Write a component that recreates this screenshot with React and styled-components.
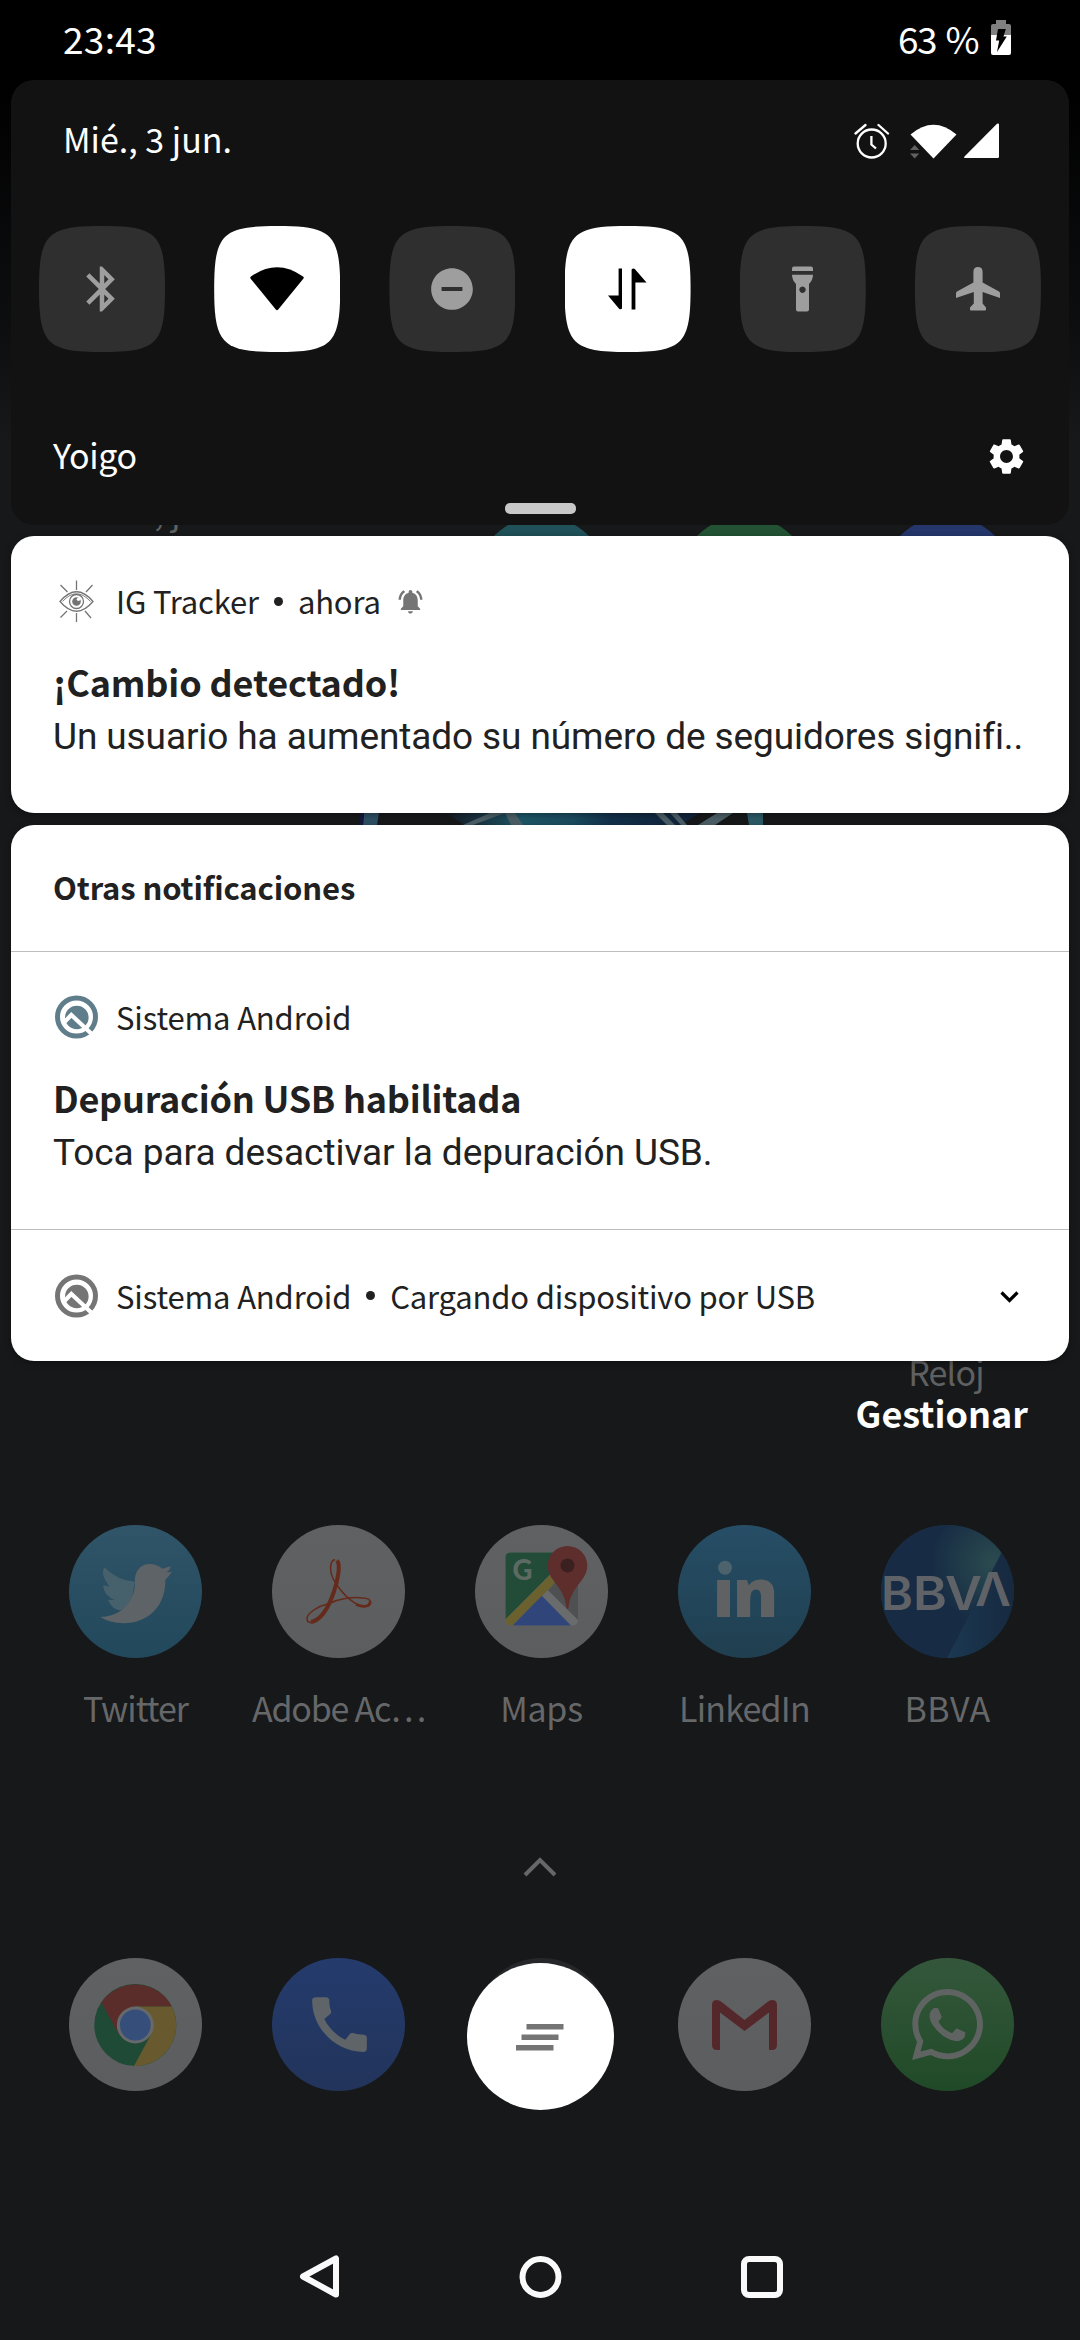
import React from "react";
import styled, { createGlobalStyle } from "styled-components";
import { MdBluetooth, MdDoNotDisturbOn, MdSettings, MdNotificationsActive, MdCall } from "react-icons/md";
import { FaWhatsapp } from "react-icons/fa";

const ui = `"Noto Sans CJK SC", "Noto Sans", sans-serif`;

const GlobalStyle = createGlobalStyle`
  * { box-sizing: border-box; }
  body { margin: 0; background: #161819; }
  svg { display: block; flex: none; }
`;

const Screen = styled.div`
  width: 1080px;
  height: 2340px;
  overflow: hidden;
  display: grid;
  grid-template: 2340px / 1080px;
  background: linear-gradient(#000 80px, #0d0e10 330px, #161819 440px);
  font-family: ${ui};
  color: #fff;
`;

const Layer = styled.div`
  grid-area: 1 / 1;
  display: flex;
  flex-direction: column;
  align-items: stretch;
`;

const Text = styled.span`
  font-family: ${(p) => p.$font || ui};
  font-size: ${(p) => p.$size}px;
  font-weight: ${(p) => p.$weight || 400};
  letter-spacing: ${(p) => p.$track || 0}px;
  word-spacing: ${(p) => p.$word || 0}px;
  line-height: 44px;
  color: ${(p) => p.$color || "inherit"};
  white-space: pre;
`;

/* ---------- launcher ---------- */

const Columns = styled.div`
  display: grid;
  grid-template-columns: repeat(5, 203px);
  margin: ${(p) => p.$top}px 0 0 34px;
  justify-items: center;
`;

const WidgetCell = styled.div`
  grid-column: span 2;
  justify-self: start;
  padding: 0 0 0 55px;
  margin-top: -27px;
`;

const HiddenApp = styled.div`
  width: 133px;
  height: 133px;
  border-radius: 50%;
  background: ${(p) => p.$color};
`;

const Artwork = styled.svg`
  margin: 164px 0 0 355px;
`;

const ClockLabel = styled(Text)`
  margin: 525px 67px 0 0;
  width: 134px;
  align-self: flex-end;
  text-align: center;
`;

const AppShortcut = styled.div`
  display: flex;
  flex-direction: column;
  align-items: center;
  gap: 28px;
`;

const Chevron = styled.svg`
  margin: 127px auto 0;
`;

/* ---------- shade ---------- */

const StatusBar = styled.div`
  height: 80px;
  padding: 0 69px 4px 63px;
  display: flex;
  align-items: center;
  justify-content: space-between;
`;

const Group = styled.div`
  display: flex;
  align-items: center;
  gap: ${(p) => p.$gap || 0}px;
`;

const Panel = styled.section`
  margin: 0 11px;
  height: 445px;
  padding-top: 34px;
  border-radius: 23px;
  background: #121212;
  display: flex;
  flex-direction: column;
`;

const DateRow = styled.div`
  height: 48px;
  padding: 1px 70px 0 52px;
  display: flex;
  align-items: center;
  justify-content: space-between;
`;

const StatusIcons = styled(Group)`
  padding-top: 5px;
`;

const Tiles = styled.div`
  margin: 64px 28px 0;
  display: flex;
  justify-content: space-between;
`;

const Tile = styled.button`
  width: 126px;
  height: 126px;
  padding: 0;
  border: 0;
  display: grid;
  place-items: center;
  background: ${(p) => (p.$on ? "#fff" : "#2f2f2f")};
  color: ${(p) => (p.$on ? "#000" : "#9e9e9e")};
  clip-path: path("M63 0C118 0 126 8 126 63C126 118 118 126 63 126C8 126 0 118 0 63C0 8 8 0 63 0Z");
`;

const CarrierRow = styled.div`
  height: 48px;
  margin-top: 80px;
  padding: 1px 41px 0 42px;
  display: flex;
  align-items: center;
  justify-content: space-between;
  & > span { padding-bottom: 3px; }
`;

const Handle = styled.div`
  width: 71px;
  height: 11px;
  margin: 23px auto 0;
  border-radius: 5px;
  background: #c8c8c8;
`;

const Card = styled.section`
  margin: ${(p) => p.$top}px 11px 0;
  height: ${(p) => p.$height}px;
  border-radius: 23px;
  background: #fff;
  color: #212121;
  box-shadow: 0 2px 6px rgba(0, 0, 0, 0.35);
  overflow: hidden;
`;

const Notification = styled.article`
  height: 278px;
  padding: 43px 42px 0;
  display: flex;
  flex-direction: column;
  border-bottom: ${(p) => (p.$line ? "1px solid #bdbdbd" : "0")};
`;

const Header = styled.header`
  height: 44px;
  display: flex;
  align-items: center;
  gap: 18px;
  margin: 0 0 36px 2px;
`;

const Body = styled(Text)`
  margin-top: 12px;
`;

const SectionTitle = styled.div`
  height: 127px;
  padding: 0 42px 3px;
  display: flex;
  align-items: center;
  border-bottom: 1px solid #bdbdbd;
`;

const Collapsed = styled.div`
  height: 131px;
  padding: 0 50px 0 44px;
  display: flex;
  align-items: center;
  justify-content: space-between;
`;

const Expand = styled.svg`
  margin-top: 3px;
`;

const Dot = styled.i`
  width: 9px;
  height: 9px;
  border-radius: 50%;
  background: #212121;
`;

const Manage = styled(Text)`
  margin: 29px 52px 0 0;
  align-self: flex-end;
`;

const Fab = styled.button`
  margin: 529px auto 0;
  width: 147px;
  height: 147px;
  padding: 0;
  border: 0;
  border-radius: 50%;
  background: #fff;
  display: grid;
  place-items: center;
`;

const NavBar = styled.nav`
  margin-top: 104px;
  padding-left: 1px;
  height: 126px;
  display: flex;
  align-items: center;
  justify-content: center;
  gap: 177px;
`;

/* ---------- drawings ---------- */

const WifiTile = () => (
  <svg width="54" height="44" viewBox="0 0 54 44">
    <path d="M1 9.500Q27-9 53 9.500Q54.300 10.500 53.300 11.800L28.200 42.600Q27 44 25.800 42.600L.7 11.800Q-.3 10.500 1 9.500Z" fill="currentColor" />
  </svg>
);

const DataTile = () => (
  <svg width="39" height="42" viewBox="0 0 39 42" fill="currentColor">
    <path d="M10.600.500H14V40.500Q13 41.800 11.300 41L0 27.500H10.600Z" />
    <path d="M27.400 41.500H23.600V1.500Q25 0 26.800 1L38.500 14.500H27.400Z" />
  </svg>
);

const FlashTile = () => (
  <svg width="21" height="46" viewBox="0 0 21 46" fill="currentColor">
    <path d="M0 5V2.500Q0 .5 2 .5H19Q21 .5 21 2.500V5Z" />
    <path fillRule="evenodd" d="M0 8.800H21Q21 14 17 18V43.500Q17 45.500 15 45.500H6Q4 45.500 4 43.500V18Q0 14 0 8.800ZM10.500 20.500a3.200 3.200 0 1 0 .01 0Z" />
  </svg>
);

const PlaneTile = () => (
  <svg width="44" height="44" viewBox="0 0 44 44" fill="currentColor">
    <path d="M22 0Q26.600 0 26.600 5V15.500L43 24.600Q44 25.300 44 26.500V31L26.600 25V36.500L30 40.500V42.500Q30 43.500 29 43.500H15Q14 43.500 14 42.500V40.500L17.800 36.500V25L0 31V26.500Q0 25.300 1 24.600L17.400 15.500V5Q17.400 0 22 0Z" />
  </svg>
);

const Battery = () => (
  <svg width="20" height="36" viewBox="0 0 20 36">
    <path d="M5 0H15V4H18Q20 4 20 6V15H0V6Q0 4 2 4H5Z" fill="#808080" />
    <path d="M0 15H20V33Q20 35 18 35H2Q0 35 0 33Z" fill="#fff" />
    <path d="M7 9H14.800L12.500 16.500H15.800L6 32L8.200 20.500H5Z" fill="#000" />
  </svg>
);

const Alarm = () => (
  <svg width="36" height="36" viewBox="0 0 36 36" fill="none" stroke="#fff" strokeWidth="2.300" strokeLinecap="round">
    <circle cx="17.700" cy="20.500" r="14" />
    <path d="M1.500 10.500L11.500 2M34 10.500L24.500 2" />
    <path d="M17.400 13V21.500L22 25.500" strokeLinecap="butt" />
  </svg>
);

const Wifi = () => (
  <svg width="47" height="35" viewBox="0 0 47 35">
    <path d="M.5 10.500Q23.500-9 46.500 10.500L23.500 34.500Z" fill="#fff" />
    <path d="M-1 19.500L8.500 19.500L12 28L12 35H-1Z" fill="#121212" opacity="0" />
    <path d="M0 26L4.700 21L9.300 26ZM0 29.500H9.300L4.700 34.500Z" fill="#616161" />
  </svg>
);

const Signal = () => (
  <svg width="35" height="36" viewBox="0 0 35 36">
    <path d="M.5 33.500L33 .8Q35 0 35 2V33.500Q35 35 33.500 35H1.200Q-.5 35 .5 33.500Z" fill="#fff" />
  </svg>
);

const Eye = () => (
  <svg width="43" height="44" viewBox="0 0 43 44" fill="none" stroke="#757575" strokeWidth="1.300">
    <path d="M5 22.500Q21.500 3 38 22.500Q21.500 42 5 22.500Z" />
    <path d="M7.500 22.500Q21.500 7 35.500 22.500" strokeWidth=".9" />
    <circle cx="21.500" cy="22.500" r="7" />
    <circle cx="21.500" cy="22.500" r="4.300" fill="#757575" stroke="none" />
    <circle cx="23.500" cy="20.200" r="1.700" fill="#fff" stroke="none" />
    <path d="M21.500 1.500V11M21.500 34V43M5.500 6L12.500 13M37.500 6L31 13M5.500 38.500L12 32M36 39L30 32" />
  </svg>
);

const AndroidQ = ({ color }) => (
  <svg width="43" height="44" viewBox="0 0 43 44" fill="none">
    <circle cx="21.500" cy="22" r="19" stroke={color} strokeWidth="5" />
    <circle cx="21.800" cy="22.500" r="11.800" fill={color} />
    <path d="M8.500 28L16.300 20L40 42" stroke="#fff" strokeWidth="4.200" />
  </svg>
);

const AppSvg = ({ id, top, bottom, children }) => (
  <svg width="133" height="133" viewBox="0 0 133 133">
    <defs>
      <linearGradient id={id} x1="0" y1="0" x2="0" y2="1">
        <stop offset="0" stopColor={top} />
        <stop offset="1" stopColor={bottom} />
      </linearGradient>
      <clipPath id={id + "-clip"}><circle cx="66.500" cy="66.500" r="66.500" /></clipPath>
    </defs>
    <circle cx="66.500" cy="66.500" r="66.500" fill={`url(#${id})`} />
    {children}
  </svg>
);

const Twitter = () => (
  <AppSvg id="tw" top="#305468" bottom="#22485c">
    <path d="M66 56.700Q49 56 35.300 42.300Q31 50 40.800 61.700L34 60.300Q35 71 45.600 75L39 74.700Q43 85 52.500 85.300L62 78Z" fill="#46606c" />
    <path d="M31.200 92Q43 92 52.500 85.300Q66 74 66 57.700C65 47 71 39 80.800 39Q88 39 93.500 43.700L101.800 41Q101 45 97.500 47.500L103 46.700Q100 51 96.300 55C97 80 80 98.300 54.200 98.300Q41 98 31.200 92Z" fill="#5d6366" />
  </AppSvg>
);

const Acrobat = () => (
  <AppSvg id="ac" top="#606162" bottom="#5c5d5e">
    <g fill="none" stroke="#652a1c" strokeWidth="1.500">
      <path d="M63 34.500C57 36 57 49 64 58.500C72 71 84 81.500 93 81.500C100.500 81.500 101 73.500 91 73C80 71.500 66 74 57 78.500C45 81.500 36 88 35 93C34.500 97 38 98.500 42 97" />
      <path d="M65 35.500C69 40 65.500 56 62 66.500C57.500 80 50 95 39 97" strokeWidth="4" />
      <path d="M84 79.500C93 83 98.500 81 98 76.500" strokeWidth="2.800" />
    </g>
  </AppSvg>
);

const Maps = () => (
  <AppSvg id="mp" top="#606162" bottom="#5c5d5e">
    <rect x="30.500" y="27.500" width="72.500" height="73" rx="5" fill="#6a6b6c" />
    <path d="M103 44V95L72.800 65L82 55Z" fill="#4f5051" />
    <path d="M35.500 27.500H97L30.500 94.500V32.500Q30.500 27.500 35.500 27.500Z" fill="#224c37" />
    <path d="M30.500 94.500L80 45.300L85.500 52.300L37.500 100.500H35.500Q30.500 100 30.500 94.500Z" fill="#6b612f" />
    <path d="M37.500 100.500L66.800 70.800L96 100.500Z" fill="#30457a" />
    <path d="M92.500 21A19.800 19.800 0 0 1 112.300 41C112 56 95 62 93.500 83Q92.500 85 91.500 83C90 62 73 56 72.700 41A19.800 19.800 0 0 1 92.500 21Z" fill="#5e2e2d" />
    <circle cx="92.500" cy="40.500" r="7" fill="#3b2020" />
    <text x="37.500" y="55.200" fontFamily="Lato, sans-serif" fontWeight="900" fontSize="27.500" fill="#5c6a63">G</text>
  </AppSvg>
);

const LinkedIn = () => (
  <AppSvg id="li" top="#264e66" bottom="#203f50">
    <circle cx="47" cy="42.700" r="7" fill="#4c626d" />
    <text x="34.500" y="91.700" fontFamily="Open Sans, sans-serif" fontWeight="800" fontSize="68" fill="#606162">ı</text>
    <text x="54.500" y="91.700" fontFamily="Open Sans, sans-serif" fontWeight="800" fontSize="68" textLength="46" lengthAdjust="spacingAndGlyphs" fill="#606162">n</text>
  </AppSvg>
);

const Bbva = () => (
  <AppSvg id="bb" top="#17304a" bottom="#15283f">
    <defs>
      <radialGradient id="bb-glow" gradientUnits="userSpaceOnUse" cx="112" cy="38" r="62">
        <stop offset="0" stopColor="#2b4b4f" />
        <stop offset="1" stopColor="#172c44" />
      </radialGradient>
      <linearGradient id="bb-side" x1="0" y1="0" x2="1" y2="0">
        <stop offset="0" stopColor="#1b3852" />
        <stop offset="1" stopColor="#16293f" />
      </linearGradient>
    </defs>
    <g clipPath="url(#bb-clip)">
      <path d="M0 0H133L120 29L66 133H0Z" fill="url(#bb-glow)" />
      <path d="M120 29L66 133H133V29Z" fill="url(#bb-side)" />
    </g>
    <g fontFamily="Inter, sans-serif" fontWeight="600" fontSize="46" fill="#5f6266">
      <text x="0" y="85.300" textLength="32" lengthAdjust="spacingAndGlyphs">B</text>
      <text x="32" y="85.300" textLength="34" lengthAdjust="spacingAndGlyphs">B</text>
      <text x="64" y="85.300" textLength="37" lengthAdjust="spacingAndGlyphs">V</text>
      <text x="94" y="80.700" textLength="36" lengthAdjust="spacingAndGlyphs">Λ</text>
    </g>
  </AppSvg>
);

const Chrome = () => (
  <AppSvg id="ch" top="#606162" bottom="#5c5d5e">
    <circle cx="66.300" cy="67" r="41" fill="#1f4a35" />
    <path d="M32.500 44.500A41 41 0 0 1 102.800 48.500H66.300V67L50 76.500Z" fill="#5a2d2a" />
    <path d="M102.800 48.500A41 41 0 0 1 65 108L82 76.500L66.300 67V48.500Z" fill="#685a2e" />
    <circle cx="66.300" cy="67" r="18.500" fill="#66696b" />
    <circle cx="66.300" cy="67" r="15.400" fill="#354e7a" />
  </AppSvg>
);

const Phone = () => (
  <AppSvg id="ph" top="#243b6c" bottom="#22345b">
    <MdCall x="31" y="30" size={73} color="#5f6468" />
  </AppSvg>
);

const Gmail = () => (
  <AppSvg id="gm" top="#606162" bottom="#5c5d5e">
    <path d="M34 47Q34 42 39 42Q41 42 43 43.500L66.500 62L90 43.500Q92 42 94 42Q99 42 99 47V87Q99 92 94 92H91V54.500L66.500 73L42 54.500V92H39Q34 92 34 87Z" fill="#54272a" />
  </AppSvg>
);

const WhatsApp = () => (
  <AppSvg id="wa" top="#34573b" bottom="#204a27">
    <FaWhatsapp x="26" y="26" size={81} color="#5f6462" />
  </AppSvg>
);

const apps = [
  { name: "Twitter", Icon: Twitter, track: -1 },
  { name: "Adobe Ac…", Icon: Acrobat, track: -1.2 },
  { name: "Maps", Icon: Maps, track: -0.3 },
  { name: "LinkedIn", Icon: LinkedIn, track: -0.8 },
  { name: "BBVA", Icon: Bbva, track: 0.5 },
];

const tiles = [
  { key: "bt", icon: <MdBluetooth size={54} /> },
  { key: "wifi", on: true, icon: <WifiTile /> },
  { key: "dnd", icon: <MdDoNotDisturbOn size={50} /> },
  { key: "data", on: true, icon: <DataTile /> },
  { key: "flash", icon: <FlashTile /> },
  { key: "plane", icon: <PlaneTile /> },
];

const Launcher = () => (
  <Layer>
    <Columns $top={516}>
      <WidgetCell>
        <Text $size={34} $color="#5f6061">Mié., jun 03</Text>
      </WidgetCell>
      <HiddenApp $color="#205058" />
      <HiddenApp $color="#225233" />
      <HiddenApp $color="#24366a" />
    </Columns>
    <Artwork width="410" height="12" viewBox="0 0 410 12">
      <defs>
        <linearGradient id="art" x1="0" x2="1" y1="0" y2="0">
          <stop offset="0" stopColor="#161a24" />
          <stop offset=".3" stopColor="#1d5566" />
          <stop offset=".5" stopColor="#1b4b5e" />
          <stop offset=".65" stopColor="#12304a" />
          <stop offset="1" stopColor="#112238" />
        </linearGradient>
      </defs>
      <path d="M90 0H345L325 12H110Z" fill="url(#art)" />
      <path d="M9 0H24L22 12H8Z" fill="#2e4f63" />
      <path d="M5 0H9L8 12H4Z" fill="#14183a" />
      <path d="M135 0H150L118 12H108ZM150 0H160L168 12H156ZM300 0H308L320 12H312ZM315 0H322L332 12H326ZM362 0H378L360 12H343Z" fill="#4c5f66" />
      <path d="M392 0H408V12H394Z" fill="#2c5a66" />
    </Artwork>
    <ClockLabel $size={34} $track={-0.8} $color="#5f6061">Reloj</ClockLabel>
    <Columns $top={131}>
      {apps.map(({ name, Icon, track }) => (
        <AppShortcut key={name}>
          <Icon />
          <Text $size={34} $track={track} $color="#666769">{name}</Text>
        </AppShortcut>
      ))}
    </Columns>
    <Chevron width="34" height="20" viewBox="0 0 34 20">
      <path d="M2 18L17 3L32 18" fill="none" stroke="#66676a" strokeWidth="4" />
    </Chevron>
    <Columns $top={81}>
      <Chrome />
      <Phone />
      <HiddenApp $color="#26272a" />
      <Gmail />
      <WhatsApp />
    </Columns>
  </Layer>
);

const Shade = () => (
  <Layer>
    <StatusBar>
      <Text $size={37} $track={0.3}>23:43</Text>
      <Group $gap={13}>
        <Text $size={37} $track={-1.6} $word={3}>63 %</Text>
        <Battery />
      </Group>
    </StatusBar>
    <Panel>
      <DateRow>
        <Text $size={34}>Mié., 3 jun.</Text>
        <StatusIcons>
          <Group $gap={20}>
            <Alarm />
            <Group $gap={7}>
              <Wifi />
              <Signal />
            </Group>
          </Group>
        </StatusIcons>
      </DateRow>
      <Tiles>
        {tiles.map((t) => <Tile key={t.key} $on={t.on}>{t.icon}</Tile>)}
      </Tiles>
      <CarrierRow>
        <Text $size={34} $track={-0.4}>Yoigo</Text>
        <MdSettings size={43} />
      </CarrierRow>
      <Handle />
    </Panel>
    <Card $top={11} $height={277}>
      <Notification>
        <Header>
          <Eye />
          <Group $gap={15}>
            <Text $size={31} $track={-0.15}>IG Tracker</Text>
            <Dot />
            <Text $size={31} $track={-0.2}>ahora</Text>
            <MdNotificationsActive size={29} color="#757575" />
          </Group>
        </Header>
        <Text $size={36} $weight={700} $track={-0.15}>¡Cambio detectado!</Text>
        <Body $size={37} $track={-0.1} $font="Roboto, sans-serif">Un usuario ha aumentado su número de seguidores signifi..</Body>
      </Notification>
    </Card>
    <Card $top={12} $height={536}>
      <SectionTitle>
        <Text $size={31} $weight={700} $track={-0.13}>Otras notificaciones</Text>
      </SectionTitle>
      <Notification $line>
        <Header>
          <AndroidQ color="#607d8b" />
          <Text $size={31} $track={-0.15}>Sistema Android</Text>
        </Header>
        <Text $size={36} $weight={700} $track={-0.26}>Depuración USB habilitada</Text>
        <Body $size={37} $track={-0.05} $font="Roboto, sans-serif">Toca para desactivar la depuración USB.</Body>
      </Notification>
      <Collapsed>
        <Group $gap={18}>
          <AndroidQ color="#757575" />
          <Group $gap={15}>
            <Text $size={31} $track={-0.15}>Sistema Android</Text>
            <Dot />
            <Text $size={31} $track={-0.2}>Cargando dispositivo por USB</Text>
          </Group>
        </Group>
        <Expand width="19" height="13" viewBox="0 0 19 13">
          <path d="M1.500 1.500L9.500 9.500L17.500 1.500" fill="none" stroke="#000" strokeWidth="3.200" />
        </Expand>
      </Collapsed>
    </Card>
    <Manage $size={36} $weight={700}>Gestionar</Manage>
    <Fab>
      <svg width="48" height="28" viewBox="0 0 48 28" fill="#757575">
        <path d="M10.500 1H47.500V6.500H10.500ZM5.500 11.500H42.500V17H5.500ZM0 22H37.500V27.500H0Z" />
      </svg>
    </Fab>
    <NavBar>
      <svg width="44" height="46" viewBox="0 0 44 46" fill="none" stroke="#fafafa" strokeWidth="6" strokeLinejoin="round">
        <path d="M38 4.500V40.500L5 22.500Z" />
      </svg>
      <svg width="44" height="44" viewBox="0 0 44 44" fill="none" stroke="#fafafa" strokeWidth="6">
        <circle cx="21.500" cy="22" r="18" />
      </svg>
      <svg width="44" height="44" viewBox="0 0 44 44" fill="none" stroke="#fafafa" strokeWidth="6">
        <rect x="4" y="4" width="36" height="36" rx="5" />
      </svg>
    </NavBar>
  </Layer>
);

export default function App() {
  return (
    <>
      <GlobalStyle />
      <Screen>
        <Launcher />
        <Shade />
      </Screen>
    </>
  );
}
